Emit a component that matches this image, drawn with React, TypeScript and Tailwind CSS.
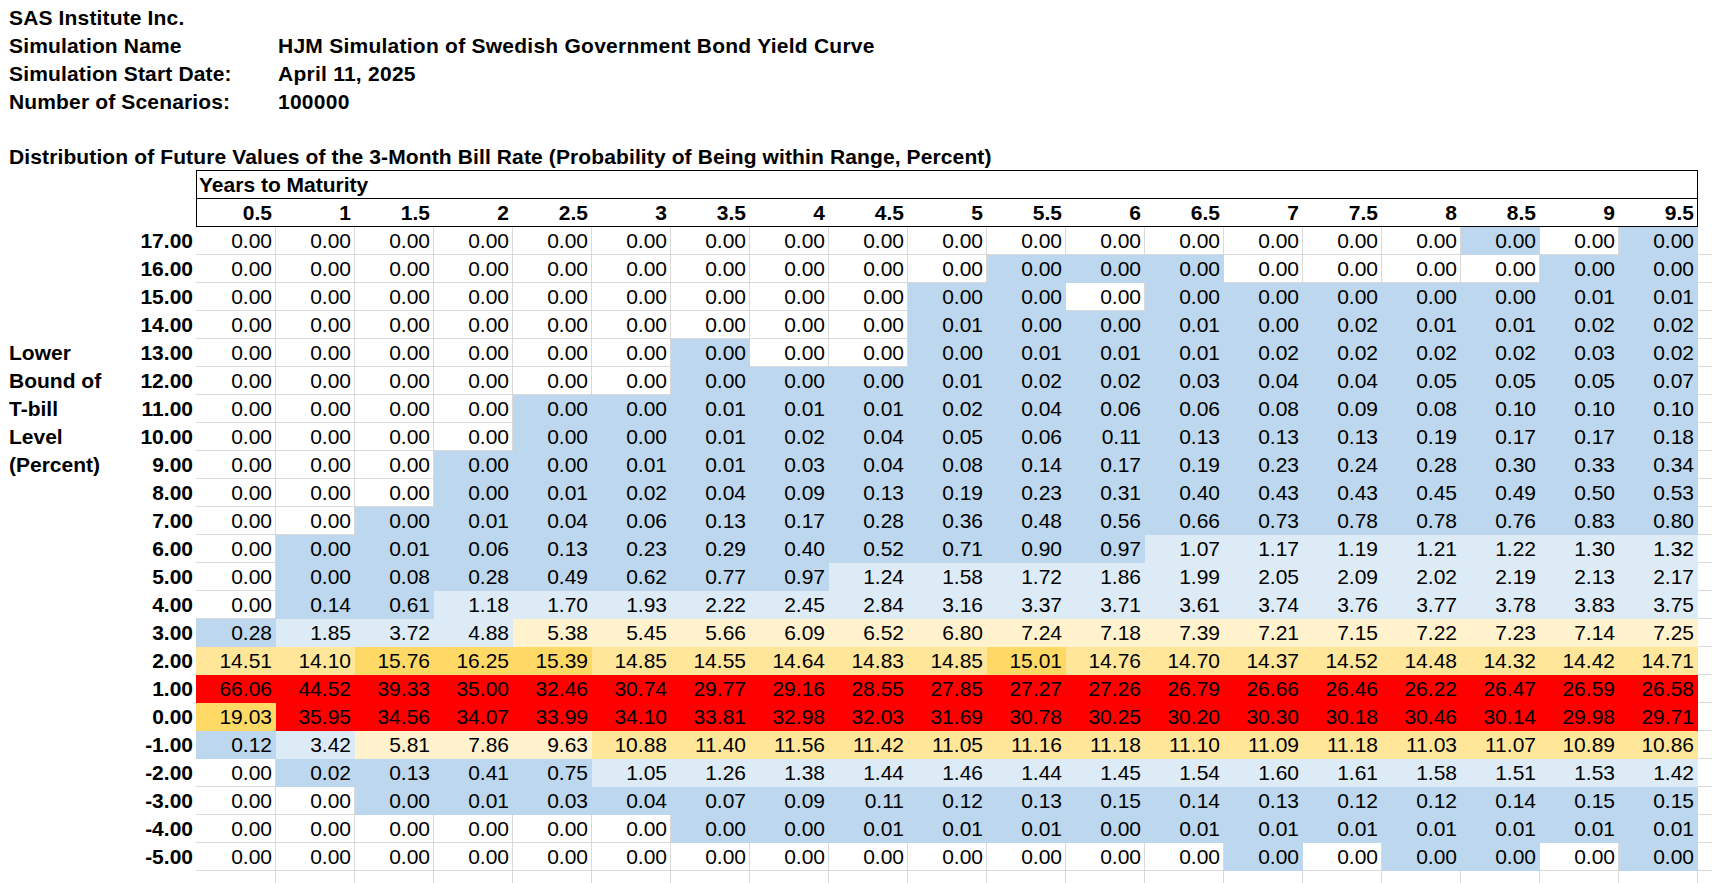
import React from "react";

const years = ["0.5", "1", "1.5", "2", "2.5", "3", "3.5", "4", "4.5", "5", "5.5", "6", "6.5", "7", "7.5", "8", "8.5", "9", "9.5"];

// "0" = exactly zero (no fill), anything else is a printed value
const rows: { label: string; side?: string; cells: string }[] = [
  { label: "17.00", cells: "0 0 0 0 0 0 0 0 0 0 0 0 0 0 0 0 0.00 0 0.00" },
  { label: "16.00", cells: "0 0 0 0 0 0 0 0 0 0 0.00 0.00 0.00 0 0 0 0 0.00 0.00" },
  { label: "15.00", cells: "0 0 0 0 0 0 0 0 0 0.00 0.00 0 0.00 0.00 0.00 0.00 0.00 0.01 0.01" },
  { label: "14.00", cells: "0 0 0 0 0 0 0 0 0 0.01 0.00 0.00 0.01 0.00 0.02 0.01 0.01 0.02 0.02" },
  { label: "13.00", side: "Lower", cells: "0 0 0 0 0 0 0.00 0 0 0.00 0.01 0.01 0.01 0.02 0.02 0.02 0.02 0.03 0.02" },
  { label: "12.00", side: "Bound of", cells: "0 0 0 0 0 0 0.00 0.00 0.00 0.01 0.02 0.02 0.03 0.04 0.04 0.05 0.05 0.05 0.07" },
  { label: "11.00", side: "T-bill", cells: "0 0 0 0 0.00 0.00 0.01 0.01 0.01 0.02 0.04 0.06 0.06 0.08 0.09 0.08 0.10 0.10 0.10" },
  { label: "10.00", side: "Level", cells: "0 0 0 0 0.00 0.00 0.01 0.02 0.04 0.05 0.06 0.11 0.13 0.13 0.13 0.19 0.17 0.17 0.18" },
  { label: "9.00", side: "(Percent)", cells: "0 0 0 0.00 0.00 0.01 0.01 0.03 0.04 0.08 0.14 0.17 0.19 0.23 0.24 0.28 0.30 0.33 0.34" },
  { label: "8.00", cells: "0 0 0 0.00 0.01 0.02 0.04 0.09 0.13 0.19 0.23 0.31 0.40 0.43 0.43 0.45 0.49 0.50 0.53" },
  { label: "7.00", cells: "0 0 0.00 0.01 0.04 0.06 0.13 0.17 0.28 0.36 0.48 0.56 0.66 0.73 0.78 0.78 0.76 0.83 0.80" },
  { label: "6.00", cells: "0 0.00 0.01 0.06 0.13 0.23 0.29 0.40 0.52 0.71 0.90 0.97 1.07 1.17 1.19 1.21 1.22 1.30 1.32" },
  { label: "5.00", cells: "0 0.00 0.08 0.28 0.49 0.62 0.77 0.97 1.24 1.58 1.72 1.86 1.99 2.05 2.09 2.02 2.19 2.13 2.17" },
  { label: "4.00", cells: "0 0.14 0.61 1.18 1.70 1.93 2.22 2.45 2.84 3.16 3.37 3.71 3.61 3.74 3.76 3.77 3.78 3.83 3.75" },
  { label: "3.00", cells: "0.28 1.85 3.72 4.88 5.38 5.45 5.66 6.09 6.52 6.80 7.24 7.18 7.39 7.21 7.15 7.22 7.23 7.14 7.25" },
  { label: "2.00", cells: "14.51 14.10 15.76 16.25 15.39 14.85 14.55 14.64 14.83 14.85 15.01 14.76 14.70 14.37 14.52 14.48 14.32 14.42 14.71" },
  { label: "1.00", cells: "66.06 44.52 39.33 35.00 32.46 30.74 29.77 29.16 28.55 27.85 27.27 27.26 26.79 26.66 26.46 26.22 26.47 26.59 26.58" },
  { label: "0.00", cells: "19.03 35.95 34.56 34.07 33.99 34.10 33.81 32.98 32.03 31.69 30.78 30.25 30.20 30.30 30.18 30.46 30.14 29.98 29.71" },
  { label: "-1.00", cells: "0.12 3.42 5.81 7.86 9.63 10.88 11.40 11.56 11.42 11.05 11.16 11.18 11.10 11.09 11.18 11.03 11.07 10.89 10.86" },
  { label: "-2.00", cells: "0 0.02 0.13 0.41 0.75 1.05 1.26 1.38 1.44 1.46 1.44 1.45 1.54 1.60 1.61 1.58 1.51 1.53 1.42" },
  { label: "-3.00", cells: "0 0 0.00 0.01 0.03 0.04 0.07 0.09 0.11 0.12 0.13 0.15 0.14 0.13 0.12 0.12 0.14 0.15 0.15" },
  { label: "-4.00", cells: "0 0 0 0 0 0 0.00 0.00 0.01 0.01 0.01 0.00 0.01 0.01 0.01 0.01 0.01 0.01 0.01" },
  { label: "-5.00", cells: "0 0 0 0 0 0 0 0 0 0 0 0 0 0.00 0 0.00 0.00 0 0.00" },
];

function fill(v: string) {
  if (v === "0") return "border-[#d9d9d9]";
  const n = parseFloat(v);
  if (n < 1) return "bg-[#bdd7ee] border-[#bdd7ee]";
  if (n < 5) return "bg-[#ddebf7] border-[#ddebf7]";
  if (n < 10) return "bg-[#fff2cc] border-[#fff2cc]";
  if (n < 15) return "bg-[#ffe699] border-[#ffe699]";
  if (n < 20) return "bg-[#ffd966] border-[#ffd966]";
  return "bg-[#ff0000] border-[#ff0000]";
}

const info = [
  ["SAS Institute Inc.", ""],
  ["Simulation Name", "HJM Simulation of Swedish Government Bond Yield Curve"],
  ["Simulation Start Date:", "April 11, 2025"],
  ["Number of Scenarios:", "100000"],
];

export default function App() {
  return (
    <div className="w-[1712px] h-[883px] overflow-hidden bg-white text-black font-['Liberation_Sans',Arial,sans-serif] text-[21px] leading-[28px] pt-[2px]">
      {info.map(([k, v]) => (
        <div key={k} className="h-[28px] pt-[2px] pl-[9px] flex font-bold whitespace-nowrap tracking-[0.15px]">
          <span className="w-[269px] shrink-0">{k}</span>
          <span className="tracking-[0.25px]">{v}</span>
        </div>
      ))}
      <div className="h-[28px]" />
      <div className="h-[28px] pt-[1px] pl-[9px] font-bold whitespace-nowrap tracking-[0.12px]">
        Distribution of Future Values of the 3-Month Bill Rate (Probability of Being within Range, Percent)
      </div>

      <div className="flex">
        <div className="w-[196px] shrink-0" />
        <div className="w-[1502px] h-[57px] border border-black font-bold">
          <div className="h-[28px] border-b border-black pl-[2px]">Years to Maturity</div>
          <div className="h-[27px] flex">
            {years.map((y, i) => (
              <div
                key={y}
                className={`${i === years.length - 1 ? "w-[78px] pr-[3px]" : "w-[79px] pr-[4px]"} shrink-0 text-right`}
              >
                {y}
              </div>
            ))}
          </div>
        </div>
      </div>

      {rows.map((r) => (
        <div key={r.label} className="h-[28px] flex">
          <div className="w-[196px] shrink-0 flex font-bold">
            <div className="w-[110px] pl-[9px] whitespace-nowrap">{r.side}</div>
            <div className="flex-1 text-right pr-[3px]">{r.label}</div>
          </div>
          {r.cells.split(" ").map((v, i) => (
            <div
              key={i}
              className={`${i === 0 ? "w-[80px]" : "w-[79px]"} shrink-0 h-[28px] border-r border-b text-right pr-[3px] ${fill(v)}`}
            >
              {v === "0" ? "0.00" : v}
            </div>
          ))}
          <div className="flex-1 border-b border-[#d9d9d9]" />
        </div>
      ))}

      <div className="h-[20px] flex">
        <div className="w-[196px] shrink-0" />
        {years.map((y, i) => (
          <div key={y} className={`${i === 0 ? "w-[80px]" : "w-[79px]"} shrink-0 border-r border-[#d9d9d9]`} />
        ))}
      </div>
    </div>
  );
}
